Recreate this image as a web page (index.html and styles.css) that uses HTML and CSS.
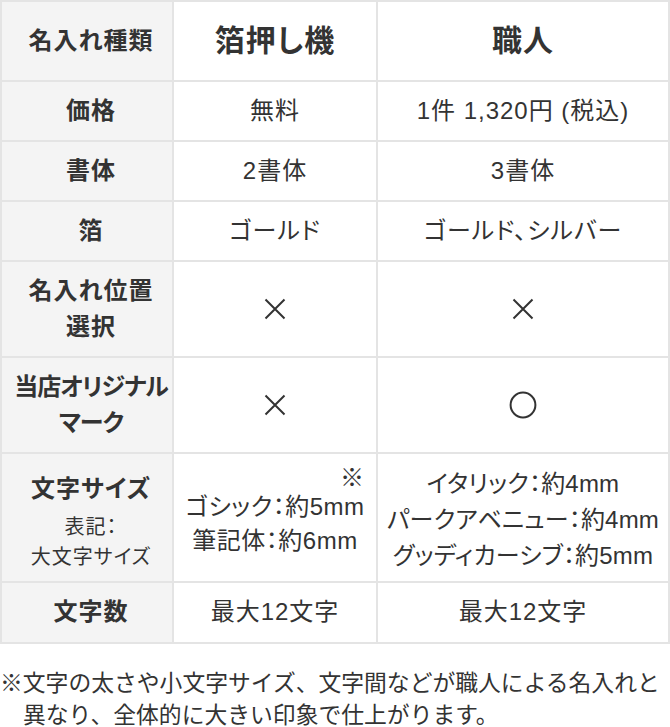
FILE: index.html
```html
<!DOCTYPE html>
<html lang="ja">
<head>
<meta charset="utf-8">
<title>名入れ種類 比較</title>
<link rel="stylesheet" href="styles.css">
</head>
<body>
<table class="compare">
  <colgroup>
    <col class="col-label">
    <col class="col-a">
    <col class="col-b">
  </colgroup>
  <thead>
    <tr class="row-head">
      <th class="label">名入れ種類</th>
      <th class="title">箔押し機</th>
      <th class="title">職人</th>
    </tr>
  </thead>
  <tbody>
    <tr>
      <th class="label">価格</th>
      <td>無料</td>
      <td>1件 1,320円 (税込)</td>
    </tr>
    <tr>
      <th class="label">書体</th>
      <td>2書体</td>
      <td>3書体</td>
    </tr>
    <tr>
      <th class="label">箔</th>
      <td>ゴールド</td>
      <td>ゴールド、シルバー</td>
    </tr>
    <tr class="row-tall">
      <th class="label">名入れ位置<br>選択</th>
      <td><svg class="mark-x" width="22" height="22" viewBox="0 0 22 22"><path d="M1.5 1.5 L20.5 20.5 M20.5 1.5 L1.5 20.5" /></svg></td>
      <td><svg class="mark-x" width="22" height="22" viewBox="0 0 22 22"><path d="M1.5 1.5 L20.5 20.5 M20.5 1.5 L1.5 20.5" /></svg></td>
    </tr>
    <tr class="row-tall">
      <th class="label label-tight">当店オリジナル<br>マーク</th>
      <td><svg class="mark-x" width="22" height="22" viewBox="0 0 22 22"><path d="M1.5 1.5 L20.5 20.5 M20.5 1.5 L1.5 20.5" /></svg></td>
      <td><svg class="mark-o" width="28" height="28" viewBox="0 0 28 28"><circle cx="14" cy="14" r="12.4" /></svg></td>
    </tr>
    <tr class="row-size">
      <th class="label">
        <span class="size-title">文字サイズ</span>
        <span class="size-sub">表記：<br>大文字サイズ</span>
      </th>
      <td class="size-a">
        <div class="size-list size-list-a">
          <span class="size-note">※</span>
          <span class="size-line">ゴシック：約5mm</span>
          <span class="size-line">筆記体：約6mm</span>
        </div>
      </td>
      <td class="size-b">
        <div class="size-list">
          <span class="size-line">イタリック：約4mm</span>
          <span class="size-line">パークアベニュー：約4mm</span>
          <span class="size-line">グッディカーシブ：約5mm</span>
        </div>
      </td>
    </tr>
    <tr class="row-last">
      <th class="label">文字数</th>
      <td>最大12文字</td>
      <td>最大12文字</td>
    </tr>
  </tbody>
</table>
<p class="note">※文字の太さや小文字サイズ、文字間などが職人による名入れと異なり、全体的に大きい印象で仕上がります。</p>
</body>
</html>
```
FILE: styles.css
```css
html, body {
  margin: 0;
  padding: 0;
  background: #ffffff;
}

body {
  font-family: "Liberation Sans", "Noto Sans CJK JP", sans-serif;
  color: #333333;
  width: 670px;
}

.compare {
  width: 670px;
  table-layout: fixed;
  border-collapse: separate;
  border-spacing: 2px;
  background: #e4e4e4;
}

.col-label { width: 170px; }
.col-a { width: 202px; }
.col-b { width: 290px; }

.compare th,
.compare td {
  background: #ffffff;
  text-align: center;
  vertical-align: middle;
  font-size: 24px;
  line-height: 36px;
  letter-spacing: 1px;
  font-feature-settings: "palt";
  padding: 11px 2px;
  font-weight: 400;
}

.compare th.label {
  background: #f4f4f4;
  font-weight: 700;
  white-space: nowrap;
  padding-left: 8px;
  padding-right: 0;
}

.compare th.label-tight {
  letter-spacing: -1px;
}

.row-head th {
  height: 44px;
  padding-top: 17px;
  padding-bottom: 17px;
}

.row-head th.title {
  font-size: 30px;
  line-height: 44px;
  font-weight: 700;
}

.mark-x path,
.mark-o circle {
  stroke: #333333;
  stroke-width: 2;
  fill: none;
}

.mark-x,
.mark-o {
  display: block;
  margin: 0 auto;
}

.row-size th {
  padding-top: 13px;
  padding-bottom: 6px;
}

.row-size td.size-a {
  padding: 8px 2px 9px;
  letter-spacing: 0.5px;
}

.row-size td.size-b {
  padding: 12px 0 7px;
  letter-spacing: 0.2px;
}

.size-title {
  display: block;
  line-height: 38px;
}

.size-sub {
  display: block;
  margin-top: 4px;
  font-size: 20px;
  line-height: 30px;
  font-weight: 400;
}

.size-list {
  display: inline-flex;
  flex-direction: column;
  align-items: center;
  vertical-align: middle;
}

.size-line {
  line-height: 36px;
}

.size-list-a .size-line {
  line-height: 34px;
}

.size-list-a {
  padding-bottom: 10px;
}

.size-note {
  align-self: flex-end;
  line-height: 24px;
}

.row-last th,
.row-last td {
  padding-top: 11px;
  padding-bottom: 12px;
}

.note {
  margin: 23px 0 0 0;
  padding-left: 23px;
  text-indent: -23px;
  font-size: 22.8px;
  line-height: 32px;
}
```
